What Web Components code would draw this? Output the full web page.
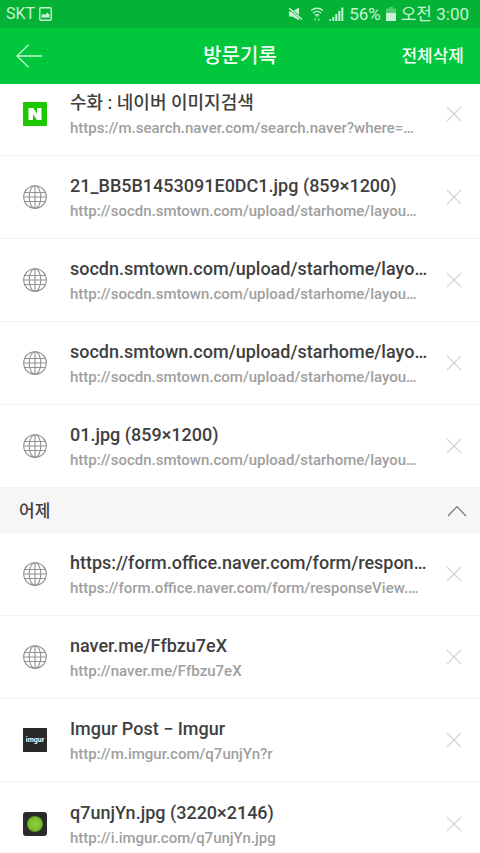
<!DOCTYPE html>
<html lang="ko">
<head>
<meta charset="utf-8">
<meta name="viewport" content="width=device-width, initial-scale=1">
<title>방문기록</title>
<style>
html{height:100%}
body{margin:0;height:100%;overflow:hidden;background:#fff;font-family:Roboto,"Noto Sans CJK KR",sans-serif;color:#3f3f3f}
</style>
</head>
<body>
<history-app>
  <status-bar slot="top" carrier="SKT" battery="56%" time="오전 3:00"></status-bar>
  <title-bar slot="top" action="전체삭제">방문기록</title-bar>
  <history-item icon="naver" url="https://m.search.naver.com/search.naver?where=…">수화 : 네이버 이미지검색</history-item>
  <history-item icon="globe" url="http://socdn.smtown.com/upload/starhome/layou…">21_BB5B1453091E0DC1.jpg (859×1200)</history-item>
  <history-item icon="globe" url="http://socdn.smtown.com/upload/starhome/layou…">socdn.smtown.com/upload/starhome/layo…</history-item>
  <history-item icon="globe" url="http://socdn.smtown.com/upload/starhome/layou…">socdn.smtown.com/upload/starhome/layo…</history-item>
  <history-item icon="globe" url="http://socdn.smtown.com/upload/starhome/layou…">01.jpg (859×1200)</history-item>
  <day-header>어제</day-header>
  <history-item icon="globe" url="https://form.office.naver.com/form/responseView.…">https://form.office.naver.com/form/respon…</history-item>
  <history-item icon="globe" url="http://naver.me/Ffbzu7eX">naver.me/Ffbzu7eX</history-item>
  <history-item icon="imgur" url="http://m.imgur.com/q7unjYn?r">Imgur Post − Imgur</history-item>
  <history-item icon="photo" url="http://i.imgur.com/q7unjYn.jpg">q7unjYn.jpg (3220×2146)</history-item>
</history-app>
<script>
const define = (name, render) => customElements.define(name, class extends HTMLElement {
  connectedCallback() {
    if (this.shadowRoot) return;
    this.attachShadow({mode: 'open'}).innerHTML = render(this);
  }
});
const esc = s => (s || '').replace(/&/g, '&amp;').replace(/</g, '&lt;').replace(/"/g, '&quot;');

define('history-app', () => `<style>
:host{display:flex;flex-direction:column;height:100%}
main{flex:1;min-height:0;overflow:hidden}
.list{margin-top:-11px}
</style><slot name="top"></slot><main><div class="list"><slot></slot></div></main>`);

define('status-bar', el => `<style>
:host{display:flex;align-items:center;justify-content:space-between;height:28px;flex:none;padding:0 11px 0 6px;background:#04b335;color:#c8f3d3;font-size:17px;line-height:28px}
div{display:flex;align-items:center;gap:5px}
.left{gap:4px}
.carrier{font-size:16px}
svg{display:block;flex:none}
</style>
<div class="left"><span class="carrier">${esc(el.getAttribute('carrier'))}</span>
<svg width="13" height="14" viewBox="0 0 13 14"><rect x=".8" y=".8" width="11.4" height="12.4" rx="1" fill="none" stroke="currentColor" stroke-width="1.4"/><path d="M2.5 10.5V8.5L4.5 6.5 6 8 8.5 5.5 10.5 8V10.5Z" fill="currentColor"/></svg></div>
<div>
<svg width="17" height="14" viewBox="0 0 17 14"><path d="M1 4.5H4L11 .8V13.2L4 9.5H1Z" fill="currentColor"/><path d="M.5 .8 14 12" stroke="#04b335" stroke-width="2.6"/><path d="M1 1 14 12.5" stroke="currentColor" stroke-width="1.6"/></svg>
<svg width="14" height="15" viewBox="0 0 14 15" fill="none" stroke="currentColor" stroke-width="1.4"><path d="M1 3.5Q7-1 13 3.5M3 6Q7 2.8 11 6M5 8.3Q7 6.7 9 8.3"/><path d="M7 8 8.3 9.5H5.7Z" fill="currentColor" stroke="none"/><path d="M5.2 14V11M8.8 14V11" opacity=".55"/></svg>
<svg width="15" height="14" viewBox="0 0 15 14" fill="currentColor"><path d="M.5 12h1.5v2H.5zM3.3 10h2v4h-2zM6.3 7h2v7h-2zM9.3 4h2v10h-2zM12.3 .5h2V14h-2z"/></svg>
<span>${esc(el.getAttribute('battery'))}</span>
<svg width="10" height="14" viewBox="0 0 10 14" fill="currentColor"><path d="M3 0H7V1.5H10V6H0V1.5H3Z" opacity=".4"/><path d="M0 6H10V14H0Z"/></svg>
<span>${esc(el.getAttribute('time'))}</span></div>`);

define('title-bar', el => `<style>
:host{display:grid;grid-template-columns:1fr auto 1fr;align-items:center;height:56px;flex:none;padding:0 16px;background:#00c73c;color:#f2fff5}
button{font:inherit;color:inherit;background:none;border:0;padding:0;display:block;justify-self:start}
.action{justify-self:end;font-size:17px;font-weight:500;line-height:24px}
h1{margin:0;font-size:20px;font-weight:500;line-height:28px}
svg{display:block;color:#c9f8d6}
</style>
<button aria-label="뒤로"><svg width="27" height="24" viewBox="0 0 27 24" fill="none" stroke="currentColor" stroke-width="1.3"><path d="M26 12H1M12.5 .8 1 12 12.5 23.2"/></svg></button>
<h1><slot></slot></h1>
<button class="action">${esc(el.getAttribute('action'))}</button>`);

define('day-header', () => `<style>
:host{display:block;background:#f6f6f6}
button{display:flex;align-items:center;justify-content:space-between;width:100%;height:45px;padding:0 13px 0 19px;border:0;background:none;font:inherit;font-size:17px;font-weight:500;line-height:24px;color:inherit}
svg{display:block}
</style><button aria-expanded="true"><span><slot></slot></span><svg width="20" height="12" viewBox="0 0 20 12" fill="none" stroke="#777" stroke-width="1.2"><path d="M1 11 10 1.5 19 11"/></svg></button>`);

const icons = {
  globe: `<svg width="24" height="24" viewBox="0 0 24 24" fill="none" stroke="#929292" stroke-width="1.1"><circle cx="12" cy="12" r="11.3"/><ellipse cx="12" cy="12" rx="5.8" ry="11.3"/><path d="M12 .7V23.3M1.700 7.500H22.300M.7 12H23.300M1.700 16.500H22.300"/></svg>`,
  naver: `<svg width="24" height="24" viewBox="0 0 24 24"><rect width="24" height="24" rx="1" fill="#1ec800"/><path d="M5.5 6H10.2L14 11.5V6H18.5V18H14L10 12.3V18H5.5Z" fill="#fff"/></svg>`,
  imgur: `<div class="imgur">imgur</div>`,
  photo: `<svg width="24" height="24" viewBox="0 0 24 24"><defs><radialGradient id="g"><stop offset="0" stop-color="#92ce3c"/><stop offset=".8" stop-color="#7cbd2b"/><stop offset="1" stop-color="#53852a"/></radialGradient></defs><rect width="24" height="24" rx="3" fill="#292c2b"/><circle cx="12" cy="12" r="8" fill="url(#g)"/></svg>`
};

define('history-item', el => `<style>
:host{display:grid;grid-template-columns:24px minmax(0,1fr) auto;align-items:center;column-gap:16px;height:83px;box-sizing:border-box;padding:0 18px 0 23px;border-bottom:1px solid #f3f3f3}
:host(:last-child){border:0}
a{display:block;padding:2px 0 0 7px;color:inherit;text-decoration:none}
a span{display:block;white-space:nowrap;overflow:hidden;text-overflow:ellipsis}
.title{font-size:18px;font-weight:500;line-height:26px}
.url{font-size:15px;font-weight:500;line-height:24px;color:#a0a0a0}
svg{display:block}
button{display:block;padding:0;border:0;background:none}
.imgur{display:grid;place-items:center;height:24px;background:#292929;color:#fff;font-size:7px;font-weight:700;line-height:8px}
</style>
<div>${icons[el.getAttribute('icon')]}</div>
<a href="${esc(el.getAttribute('url'))}"><span class="title"><slot></slot></span><span class="url">${esc(el.getAttribute('url'))}</span></a>
<button aria-label="삭제"><svg width="16" height="16" viewBox="0 0 16 16" stroke="#d4d4d4" stroke-width="1.2"><path d="M1 1 15 15M15 1 1 15"/></svg></button>`);
</script>
</body>
</html>
